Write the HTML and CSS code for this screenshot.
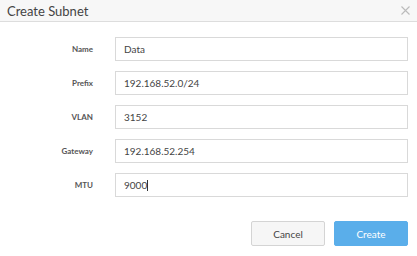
FILE: index.html
```html
<!DOCTYPE html>
<html>
<head>
  <title>Create Subnet</title>
  <link rel="stylesheet" href="styles.css">
</head>
<body>
  <div class="dialog">
    <div class="header">
      <span class="title">Create Subnet</span>
      <svg class="close" width="9" height="9" viewBox="0 0 9 9"><path d="M0.5 0.5L8.5 8.5M8.5 0.5L0.5 8.5" stroke="#bbb" stroke-width="1.1"/></svg>
    </div>
    <form class="form" onsubmit="return false">
      <div class="row"><label>Name</label><input type="text" value="Data"></div>
      <div class="row"><label>Prefix</label><input type="text" value="192.168.52.0/24"></div>
      <div class="row"><label>VLAN</label><input type="text" value="3152"></div>
      <div class="row"><label>Gateway</label><input type="text" value="192.168.52.254"></div>
      <div class="row"><label>MTU</label><div class="input focus">9000<span class="caret"></span></div></div>
      <div class="btns">
        <button type="button" class="cancel">Cancel</button>
        <button type="button" class="create">Create</button>
      </div>
    </form>
  </div>
</body>
</html>
```

FILE: styles.css
```css
body { margin: 0; font-family: "Lato", "Liberation Sans", sans-serif; background: #fff; }
.dialog { width: 417px; height: 256px; }
.header { height: 22px; background: #f7f7f7; border-bottom: 1px solid #ddd; display: flex; align-items: center; justify-content: space-between; padding: 0 7px 0 7px; box-sizing: border-box; }
.title { font-size: 13px; color: #444; }
.close { margin-right: 0; }
.form { padding: 15px 9px 0 0; }
.row { display: flex; align-items: center; height: 24px; margin-bottom: 10px; }
label { width: 93px; text-align: right; font-size: 8px; font-weight: bold; color: #555; margin-right: 22px; }
input, .input { flex: 1; height: 24px; box-sizing: border-box; border: 1px solid #d9d9d9; padding: 0 8px; font-family: inherit; font-size: 10px; color: #444; outline: none; }
.input { display: flex; align-items: center; }
.caret { display: inline-block; width: 1px; height: 11px; background: #333; }
.btns { display: flex; justify-content: flex-end; gap: 9px; margin-top: 24px; }
button { height: 25px; font-family: inherit; font-size: 10px; border-radius: 2px; }
.cancel { width: 74px; background: #f6f6f6; border: 1px solid #d4d4d4; color: #444; }
.create { width: 74px; background: #5aaeea; border: 1px solid #5aaeea; color: #fff; }
```
